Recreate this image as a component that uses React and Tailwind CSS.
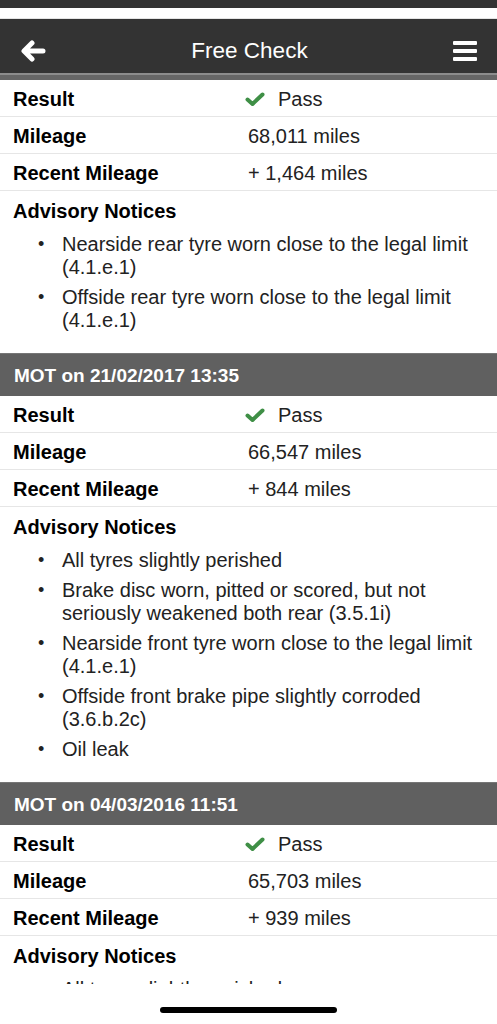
const sections = [
  {
    title: null,
    mileage: "68,011 miles",
    recent: "+ 1,464 miles",
    notices: [
      "Nearside rear tyre worn close to the legal limit (4.1.e.1)",
      "Offside rear tyre worn close to the legal limit (4.1.e.1)",
    ],
  },
  {
    title: "MOT on 21/02/2017 13:35",
    mileage: "66,547 miles",
    recent: "+ 844 miles",
    notices: [
      "All tyres slightly perished",
      "Brake disc worn, pitted or scored, but not seriously weakened both rear (3.5.1i)",
      "Nearside front tyre worn close to the legal limit (4.1.e.1)",
      "Offside front brake pipe slightly corroded (3.6.b.2c)",
      "Oil leak",
    ],
  },
  {
    title: "MOT on 04/03/2016 11:51",
    mileage: "65,703 miles",
    recent: "+ 939 miles",
    notices: ["All tyres slightly perished", "Oil leak"],
  },
];

function Check() {
  return (
    <svg width="20" height="15" viewBox="0 0 20 15" className="-ml-[3px] mr-[13px]">
      <polyline
        points="2.5,7.5 7.5,12 17.5,2.5"
        fill="none"
        stroke="#3f8f46"
        strokeWidth="4"
        strokeLinecap="round"
        strokeLinejoin="round"
      />
    </svg>
  );
}

function Row({ label, children }) {
  return (
    <div className="flex items-center h-[37px] pt-[3px] border-b border-[#e6e6e6]">
      <div className="w-[248px] pl-[13px] font-bold text-black">{label}</div>
      <div className="flex items-center text-[#222]">{children}</div>
    </div>
  );
}

function Section({ data }) {
  return (
    <div>
      {data.title && (
        <div className="h-[43px] bg-[#606060] border-t border-[#767676] flex items-center pl-[14px] text-white font-bold text-[19px]">
          {data.title}
        </div>
      )}
      <Row label="Result">
        <Check />
        Pass
      </Row>
      <Row label="Mileage">{data.mileage}</Row>
      <Row label="Recent Mileage">{data.recent}</Row>
      <div className="pt-[9px] pb-[21px]">
        <div className="pl-[13px] font-bold text-black leading-[22px] mb-[11px]">
          Advisory Notices
        </div>
        <div className="flex flex-col gap-[7px]">
          {data.notices.map((n) => (
            <div key={n} className="flex pl-[38px] pr-3 text-[#222]">
              <span className="w-[24px] shrink-0 text-[18px]">•</span>
              <span>{n}</span>
            </div>
          ))}
        </div>
      </div>
    </div>
  );
}

export default function App() {
  return (
    <div
      className="w-[497px] h-[1024px] bg-white flex flex-col overflow-hidden text-[20px] leading-[23px]"
      style={{ fontFamily: '"Liberation Sans", Arial, sans-serif' }}
    >
      <div className="h-[8px] bg-[#333] shrink-0" />
      <div className="h-[11px] shrink-0 border-b border-[#e4e4e4]" />
      <div className="h-[54px] shrink-0 bg-[#333] flex items-center justify-between pt-[9px] px-[20px]">
        <svg width="26" height="22" viewBox="0 0 26 22">
          <path
            d="M23 11 H5 M12 3 L4 11 L12 19"
            fill="none"
            stroke="white"
            strokeWidth="5"
            strokeLinecap="round"
            strokeLinejoin="round"
          />
        </svg>
        <div className="text-white text-[22.5px]">Free Check</div>
        <div className="flex flex-col gap-[4px] w-[24px]">
          <div className="h-[4px] bg-white rounded-[1px]" />
          <div className="h-[4px] bg-white rounded-[1px]" />
          <div className="h-[4px] bg-white rounded-[1px]" />
        </div>
      </div>
      <div className="h-[2px] bg-[#8c8c8c] shrink-0" />
      <div className="h-[5px] bg-[#666] shrink-0" />
      <div className="flex-1 overflow-hidden">
        {sections.map((s, i) => (
          <Section key={i} data={s} />
        ))}
      </div>
      <div className="h-[40px] shrink-0 bg-white flex justify-center pt-[23px]">
        <div className="w-[177px] h-[6px] bg-black rounded-full" />
      </div>
    </div>
  );
}
